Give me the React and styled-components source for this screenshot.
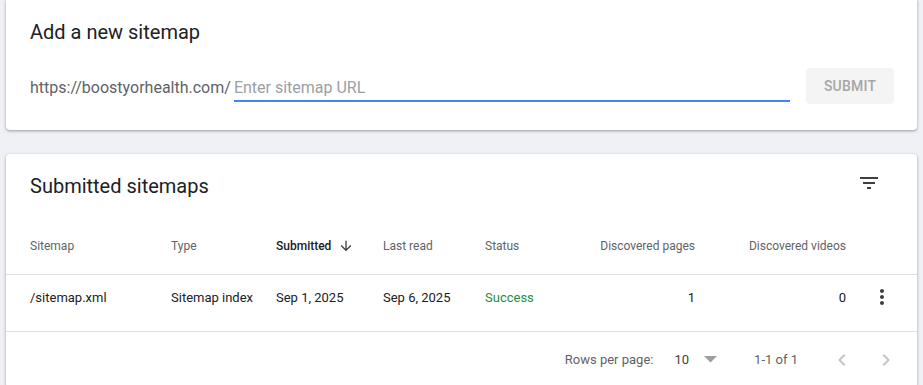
import { styled, createGlobalStyle } from "styled-components";

const GlobalStyle = createGlobalStyle`
  html, body {
    margin: 0;
    padding: 0;
    background: #eff1f6;
    font-family: Roboto, "Noto Sans", Arial, sans-serif;
    color: #202124;
    overflow: hidden;
  }
  * { box-sizing: border-box; }
`;

const columns = [
  { key: "sitemap", label: "Sitemap", width: 165 },
  { key: "type", label: "Type", width: 105 },
  { key: "submitted", label: "Submitted", width: 107, sorted: true },
  { key: "lastRead", label: "Last read", width: 102 },
  { key: "status", label: "Status", width: 90 },
  { key: "pages", label: "Discovered pages", width: 120, right: true },
  { key: "videos", label: "Discovered videos", width: 151, right: true },
  { key: "menu", label: "", width: 71 },
];

const rows = [
  {
    sitemap: "/sitemap.xml",
    type: "Sitemap index",
    submitted: "Sep 1, 2025",
    lastRead: "Sep 6, 2025",
    status: "Success",
    pages: "1",
    videos: "0",
  },
];

const FilterIcon = () => (
  <svg width="24" height="24" viewBox="0 0 24 24" fill="#3c4043">
    <path d="M10 18h4v-2h-4v2zM3 6v2h18V6H3zm3 7h12v-2H6v2z" />
  </svg>
);

const ArrowDown = () => (
  <svg width="16" height="16" viewBox="0 0 24 24" fill="#3c4043">
    <path d="M20 12l-1.41-1.41L13 16.17V4h-2v12.17l-5.58-5.59L4 12l8 8 8-8z" />
  </svg>
);

const MoreVert = () => (
  <svg width="24" height="24" viewBox="0 0 24 24" fill="#3c4043">
    <path d="M12 8c1.1 0 2-.9 2-2s-.9-2-2-2-2 .9-2 2 .9 2 2 2zm0 2c-1.1 0-2 .9-2 2s.9 2 2 2 2-.9 2-2-.9-2-2-2zm0 6c-1.1 0-2 .9-2 2s.9 2 2 2 2-.9 2-2-.9-2-2-2z" />
  </svg>
);

const Chevron = ({ dir }) => (
  <svg width="24" height="24" viewBox="0 0 24 24" fill="#c4c4c4">
    {dir === "left" ? (
      <path d="M15.41 7.41L14 6l-6 6 6 6 1.41-1.41L10.83 12z" />
    ) : (
      <path d="M10 6L8.59 7.41 13.17 12l-4.58 4.59L10 18l6-6z" />
    )}
  </svg>
);

const App = () => {
  return (
    <Page>
      <GlobalStyle />
      <AddCard>
        <CardTitle>Add a new sitemap</CardTitle>
        <FormRow>
          <Field>
            <Prefix>https://boostyorhealth.com/</Prefix>
            <UrlInput placeholder="Enter sitemap URL" />
          </Field>
          <SubmitButton disabled>SUBMIT</SubmitButton>
        </FormRow>
      </AddCard>

      <ListCard>
        <TitleRow>
          <CardTitle>Submitted sitemaps</CardTitle>
          <IconButton>
            <FilterIcon />
          </IconButton>
        </TitleRow>
        <Table>
          <colgroup>
            {columns.map((c) => (
              <col key={c.key} style={{ width: c.width }} />
            ))}
          </colgroup>
          <thead>
            <tr>
              {columns.map((c) => (
                <HeadCell key={c.key} $right={c.right} $active={c.sorted}>
                  {c.sorted ? (
                    <SortLabel>
                      {c.label}
                      <ArrowDown />
                    </SortLabel>
                  ) : (
                    c.label
                  )}
                </HeadCell>
              ))}
            </tr>
          </thead>
          <tbody>
            {rows.map((r) => (
              <tr key={r.sitemap}>
                {columns.map((c) =>
                  c.key === "menu" ? (
                    <MenuCell key={c.key}>
                      <MoreVert />
                    </MenuCell>
                  ) : (
                    <BodyCell
                      key={c.key}
                      $right={c.right}
                      $success={c.key === "status"}
                    >
                      {r[c.key]}
                    </BodyCell>
                  )
                )}
              </tr>
            ))}
          </tbody>
        </Table>
        <Pager>
          <PagerLabel>Rows per page:</PagerLabel>
          <RowsSelect>
            <span>10</span>
            <svg width="13" height="7" viewBox="0 0 13 7">
              <polygon points="0,0 13,0 6.5,6.5" fill="#9e9e9e" />
            </svg>
          </RowsSelect>
          <PagerLabel $range>1-1 of 1</PagerLabel>
          <PagerNav>
            <Chevron dir="left" />
            <Chevron dir="right" />
          </PagerNav>
        </Pager>
      </ListCard>
    </Page>
  );
};

export default App;

const Page = styled.div`
  display: flex;
  flex-direction: column;
  gap: 24px;
  padding: 0 6px;
`;

const Card = styled.section`
  background: #fff;
  border-radius: 0 0 4px 4px;
  box-shadow: 0 1px 2px rgba(60, 64, 67, 0.3),
    0 1px 3px 1px rgba(60, 64, 67, 0.15);
`;

const AddCard = styled(Card)`
  height: 130px;
  padding: 18px 23px 0 24px;
`;

const ListCard = styled(Card)`
  border-radius: 4px;
`;

const CardTitle = styled.h2`
  margin: 0;
  font-size: 20px;
  line-height: 28px;
  font-weight: 400;
  color: #202124;
`;

const FormRow = styled.div`
  display: flex;
  align-items: flex-end;
  gap: 16px;
  margin-top: 22px;
  height: 36px;
`;

const Field = styled.label`
  flex: 1;
  display: flex;
  align-items: baseline;
  gap: 3px;
  margin-bottom: 2px;
`;

const Prefix = styled.span`
  font-size: 16px;
  line-height: 20px;
  color: #5f6368;
  white-space: nowrap;
`;

const UrlInput = styled.input`
  flex: 1;
  min-width: 0;
  border: none;
  border-bottom: 2px solid #4285f4;
  padding: 1px 0 2px;
  font-family: inherit;
  font-size: 16px;
  line-height: 20px;
  color: #202124;
  outline: none;
  background: transparent;

  &::placeholder {
    color: #9aa0a6;
  }
`;

const SubmitButton = styled.button`
  width: 88px;
  height: 36px;
  border: none;
  border-radius: 4px;
  background: #f4f4f4;
  color: #a6a6a6;
  font-family: inherit;
  font-size: 14px;
  font-weight: 500;
  letter-spacing: 0.2px;
`;

const TitleRow = styled.div`
  display: flex;
  justify-content: space-between;
  align-items: flex-start;
  padding: 18px 36px 0 24px;
`;

const IconButton = styled.div`
  display: flex;
  margin-top: -1px;
`;

const Table = styled.table`
  width: 100%;
  margin-top: 18px;
  border-collapse: collapse;
  table-layout: fixed;
`;

const HeadCell = styled.th`
  height: 56px;
  padding: 0;
  border-bottom: 1px solid #e0e0e0;
  font-size: 12px;
  font-weight: ${({ $active }) => ($active ? 500 : 400)};
  color: ${({ $active }) => ($active ? "#202124" : "#5f6368")};
  text-align: ${({ $right }) => ($right ? "right" : "left")};
  white-space: nowrap;

  &:first-child {
    padding-left: 24px;
  }
`;

const SortLabel = styled.span`
  display: inline-flex;
  align-items: center;
  gap: 7px;
`;

const BodyCell = styled.td`
  padding: 13px 0 23px;
  vertical-align: top;
  border-bottom: 1px solid #e0e0e0;
  font-size: 13px;
  line-height: 20px;
  color: ${({ $success }) => ($success ? "#1e8e3e" : "#202124")};
  text-align: ${({ $right }) => ($right ? "right" : "left")};
  white-space: nowrap;

  &:first-child {
    padding-left: 24px;
  }
`;

const MenuCell = styled.td`
  padding: 10px 0 0;
  vertical-align: top;
  border-bottom: 1px solid #e0e0e0;

  svg {
    display: block;
    margin: 0 auto;
  }
`;

const Pager = styled.div`
  display: flex;
  justify-content: flex-end;
  align-items: center;
  height: 56px;
  padding-right: 19px;
`;

const PagerLabel = styled.span`
  font-size: 13px;
  color: #5f6368;
  margin-right: ${({ $range }) => ($range ? "32px" : "21px")};
`;

const RowsSelect = styled.div`
  display: flex;
  align-items: center;
  gap: 15px;
  margin-right: 37px;
  font-size: 13px;
  color: #3c4043;
`;

const PagerNav = styled.div`
  display: flex;
  gap: 20px;

  svg {
    display: block;
  }
`;
